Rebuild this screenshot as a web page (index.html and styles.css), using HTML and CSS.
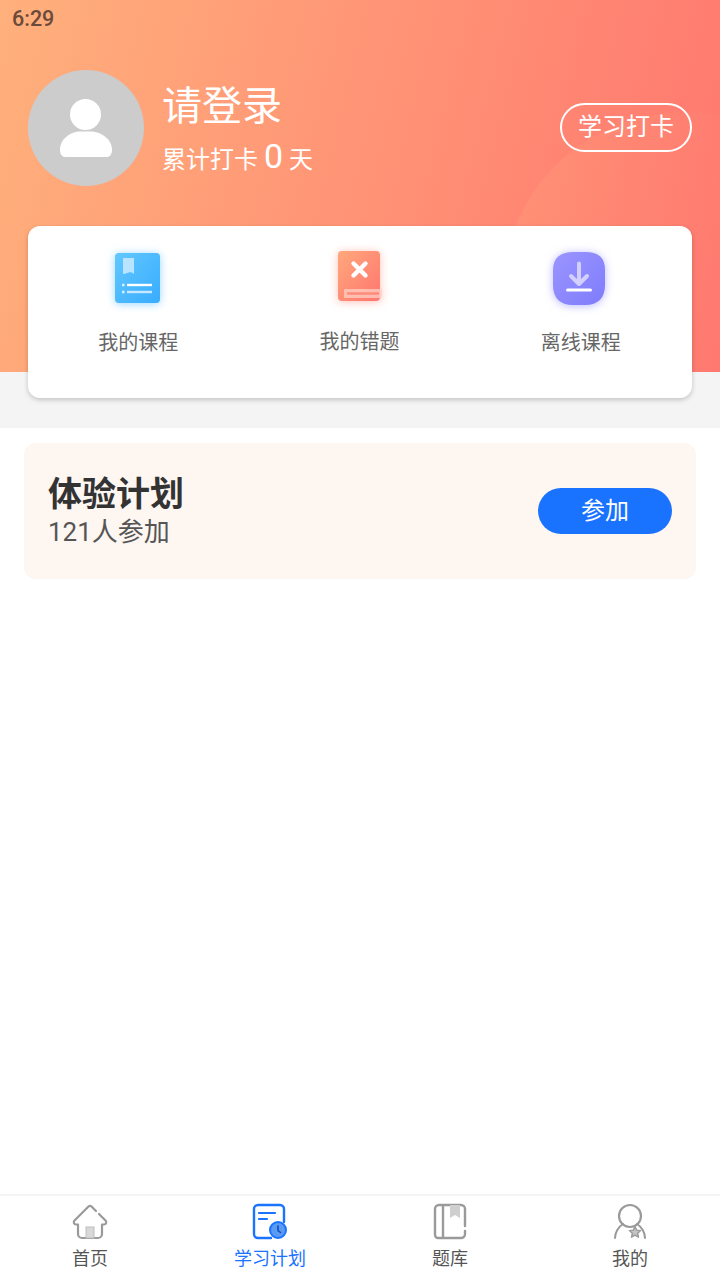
FILE: index.html
```html
<!DOCTYPE html>
<html lang="zh-CN">
<head>
<meta charset="utf-8">
<title>学习计划</title>
<link rel="stylesheet" href="styles.css">
</head>
<body>
<div class="app">
  <header class="hero">
    <div class="hero-bg"><div class="hero-circle"></div></div>
    <div class="status">6:29</div>
    <div class="profile">
      <div class="avatar">
        <svg class="avatar-icon" width="116" height="116" viewBox="0 0 116 116">
          <circle cx="57.500" cy="44.500" r="15.500" fill="#fff"/>
          <path d="M32 80c0-11 10-18.500 21-18.500h9c11 0 22 7.500 22 18.500 0 4-2 7-5 7H37c-3 0-5-3-5-7z" fill="#fff"/>
        </svg>
      </div>
      <div class="who">
        <div class="who-name">请登录</div>
        <div class="who-sub">累计打卡 <span class="who-num">0</span> 天</div>
      </div>
      <div class="checkin">学习打卡</div>
    </div>
    <div class="shortcuts">
      <div class="shortcut">
        <svg class="sc-icon sc-blue" width="60" height="66" viewBox="0 0 60 66">
          <defs><linearGradient id="gb" x1="0" y1="0" x2="1" y2="1"><stop offset="0" stop-color="#62c8ff"/><stop offset="1" stop-color="#38acff"/></linearGradient></defs>
          <rect x="7" y="8" width="45" height="50" rx="4" fill="url(#gb)"/>
          <path d="M15 13h11v16c-2-2-4-2-5.500-1.500S17 29 15 29z" fill="#b9e4ff"/>
          <path d="M19 40h25" stroke="#fff" stroke-width="2.400"/>
          <path d="M19 47h25" stroke="#c5eaff" stroke-width="2.400"/>
          <path d="M14 40h2.500M14 47h2.500" stroke="#d8f1ff" stroke-width="2.400"/>
        </svg>
        <div class="sc-label">我的课程</div>
      </div>
      <div class="shortcut">
        <svg class="sc-icon sc-red" width="60" height="66" viewBox="0 0 60 66">
          <defs><linearGradient id="gr" x1="0" y1="0" x2="1" y2="1"><stop offset="0" stop-color="#ffa87c"/><stop offset="1" stop-color="#ff766f"/></linearGradient></defs>
          <rect x="9" y="6" width="42" height="50" rx="4" fill="url(#gr)"/>
          <path d="M24.500 18.500l12 12M36.500 18.500l-12 12" stroke="#fff" stroke-width="4.400" stroke-linecap="round"/>
          <rect x="15" y="44" width="38" height="9" rx="1" fill="#ffd0c4" fill-opacity=".75"/>
          <path d="M18 48.500h32" stroke="#ff8a7a" stroke-width="2.400"/>
        </svg>
        <div class="sc-label sc-label-up">我的错题</div>
      </div>
      <div class="shortcut">
        <svg class="sc-icon sc-purple" width="60" height="66" viewBox="0 0 60 66">
          <defs><linearGradient id="gp" x1="0" y1="0" x2="1" y2="1"><stop offset="0" stop-color="#9b95ff"/><stop offset="1" stop-color="#7f7cfb"/></linearGradient></defs>
          <path d="M24 7h11c14 0 20 6 20 18v15c0 13-7 20-20 20H23C10 60 3 53 3 40V25C3 13 10 7 24 7z" fill="url(#gp)"/>
          <path d="M29 18.500v20" stroke="#d3d0ff" stroke-width="4" stroke-linecap="round"/>
          <path d="M21 31l8 8 8-8" fill="none" stroke="#d3d0ff" stroke-width="4" stroke-linecap="round" stroke-linejoin="round"/>
          <path d="M17.500 45h23" stroke="#fff" stroke-width="3" stroke-linecap="round"/>
        </svg>
        <div class="sc-label">离线课程</div>
      </div>
    </div>
  </header>
  <main class="plans">
    <div class="plan">
      <div class="plan-text">
        <div class="plan-title">体验计划</div>
        <div class="plan-count">121人参加</div>
      </div>
      <div class="plan-join">参加</div>
    </div>
  </main>
  <nav class="tabs">
    <div class="tab">
      <svg class="tab-icon" width="38" height="38" viewBox="0 0 38 38">
        <path d="M25 8l-4.500-4.500a2.200 2.200 0 0 0-3 0L3.500 17.500C2 19 3 21.500 5 21.500h2V31a4 4 0 0 0 4 4h16a4 4 0 0 0 4-4v-9.500h2c2 0 3-2.500 1.500-4L28 11" fill="none" stroke="#9a9a9a" stroke-width="2.200" stroke-linecap="round" stroke-linejoin="round"/>
        <rect x="15" y="24" width="8" height="11" fill="#d8d8d8" stroke="#bdbdbd" stroke-width="1"/>
      </svg>
      <div class="tab-label">首页</div>
    </div>
    <div class="tab tab-active">
      <svg class="tab-icon" width="38" height="38" viewBox="0 0 38 38">
        <path d="M33 19V6a4 4 0 0 0-4-4H7a4 4 0 0 0-4 4v25a4 4 0 0 0 4 4h13" fill="none" stroke="#1a73ff" stroke-width="2.400" stroke-linecap="round"/>
        <path d="M8 10h16M8 16h8" stroke="#1a73ff" stroke-width="2.200" stroke-linecap="round"/>
        <circle cx="27" cy="27" r="8" fill="#5a9af5" stroke="#1a73ff" stroke-width="2"/>
        <path d="M27 23v4.500l2.500 2" fill="none" stroke="#0e4fb3" stroke-width="1.600" stroke-linecap="round"/>
      </svg>
      <div class="tab-label">学习计划</div>
    </div>
    <div class="tab">
      <svg class="tab-icon" width="38" height="38" viewBox="0 0 38 38">
        <path d="M34 23V6a4 4 0 0 0-4-4H8a4 4 0 0 0-4 4v26a3 3 0 0 0 3 3h23a4 4 0 0 0 4-4v-3" fill="none" stroke="#9a9a9a" stroke-width="2.400" stroke-linecap="round"/>
        <path d="M12 2v33" stroke="#9a9a9a" stroke-width="2.400"/>
        <path d="M19 2h10v13l-5-3-5 3z" fill="#cfcfcf"/>
      </svg>
      <div class="tab-label">题库</div>
    </div>
    <div class="tab">
      <svg class="tab-icon" width="38" height="38" viewBox="0 0 38 38">
        <circle cx="19" cy="13" r="11" fill="none" stroke="#9a9a9a" stroke-width="2.200"/>
        <path d="M4 35c0-5 3-11 8-14M34 35c0-5-3-11-8-14" fill="none" stroke="#9a9a9a" stroke-width="2" stroke-linecap="round"/>
        <path d="M24 23.500l1.700 3.600 3.900.5-2.900 2.700.8 3.900-3.500-2-3.500 2 .8-3.900-2.900-2.700 3.900-.5z" fill="#c4c4c4" stroke="#9a9a9a" stroke-width="1.400" stroke-linejoin="round"/>
      </svg>
      <div class="tab-label">我的</div>
    </div>
  </nav>
</div>
</body>
</html>
```
FILE: styles.css
```css
* { box-sizing: border-box; }
html, body { margin: 0; padding: 0; background: #fff; }
body { font-family: Roboto, "Noto Sans CJK SC", sans-serif; }
.app { width: 720px; height: 1280px; display: flex; flex-direction: column; overflow: hidden; }

.hero { position: relative; height: 428px; padding: 0 28px; background: #f4f4f4; flex: none; }
.hero-bg { position: absolute; left: 0; top: 0; width: 720px; height: 372px; overflow: hidden; background: linear-gradient(104deg, #ffb07c 0%, #ff766f 100%); }
.hero-circle { position: absolute; left: 502px; top: 112px; width: 366px; height: 366px; border-radius: 50%; background: linear-gradient(90deg, rgba(255,190,130,.16), rgba(255,190,130,.03) 60%); }
.status { position: relative; height: 40px; margin-left: -16px; padding-top: 7px; font-size: 21.500px; line-height: 24px; font-weight: 500; color: #6a4a3a; }

.profile { position: relative; display: flex; align-items: center; margin-top: 30px; height: 116px; }
.avatar { width: 116px; height: 116px; border-radius: 50%; background: #ccc; flex: none; }
.avatar-icon { display: block; }
.who { margin-left: 18px; flex: 1; color: #fff; padding-top: 9px; }
.who-name { font-size: 40px; line-height: 52px; margin-top: -4px; }
.who-sub { font-size: 24px; line-height: 40px; margin-top: 3px; white-space: nowrap; }
.who-num { font-size: 34px; }
.checkin { width: 132px; height: 49px; margin-top: -2px; border: 2px solid #fff; border-radius: 25px; color: #fff; font-size: 24px; line-height: 45px; text-align: center; }

.shortcuts { position: relative; display: grid; grid-template-columns: repeat(3, 1fr); height: 172px; margin-top: 40px; background: #fff; border-radius: 12px; box-shadow: 0 2px 5px rgba(0,0,0,.2); }
.shortcut { display: flex; flex-direction: column; align-items: center; padding: 19px 1px 0 0; }
.sc-icon { display: block; margin-left: -1px; overflow: visible; }
.sc-blue { filter: drop-shadow(0 1px 4px rgba(70,180,255,.55)); }
.sc-red { filter: drop-shadow(0 1px 4px rgba(255,130,110,.5)); }
.sc-purple { filter: drop-shadow(0 1px 4px rgba(130,125,255,.55)); }
.sc-label { margin-top: 18px; font-size: 20px; line-height: 28px; color: #666; }
.sc-label-up { margin-top: 17px; }

.plans { flex: 1; padding: 15px 24px 0; background: #fff; }
.plan { display: flex; align-items: center; justify-content: space-between; height: 136px; padding: 0 24px 0 24px; background: #fdf6f1; border-radius: 12px; }
.plan-text { padding-top: 1px; }
.plan-title { font-size: 34px; line-height: 42px; font-weight: 700; color: #333; white-space: nowrap; margin-top: -3px; }
.plan-count { font-size: 26px; line-height: 32px; color: #555; margin-top: 1px; white-space: nowrap; }
.plan-join { width: 134px; height: 46px; border-radius: 23px; background: #1a73ff; color: #fff; font-size: 24px; line-height: 46px; text-align: center; }

.tabs { display: grid; grid-template-columns: repeat(4, 1fr); height: 86px; border-top: 2px solid #f4f4f4; background: #fff; flex: none; }
.tab { display: flex; flex-direction: column; align-items: center; padding-top: 7px; }
.tab-icon { display: block; }
.tab-label { font-size: 18px; line-height: 24px; margin-top: 6px; color: #555; }
.tab-active .tab-label { color: #1a73ff; }
```
